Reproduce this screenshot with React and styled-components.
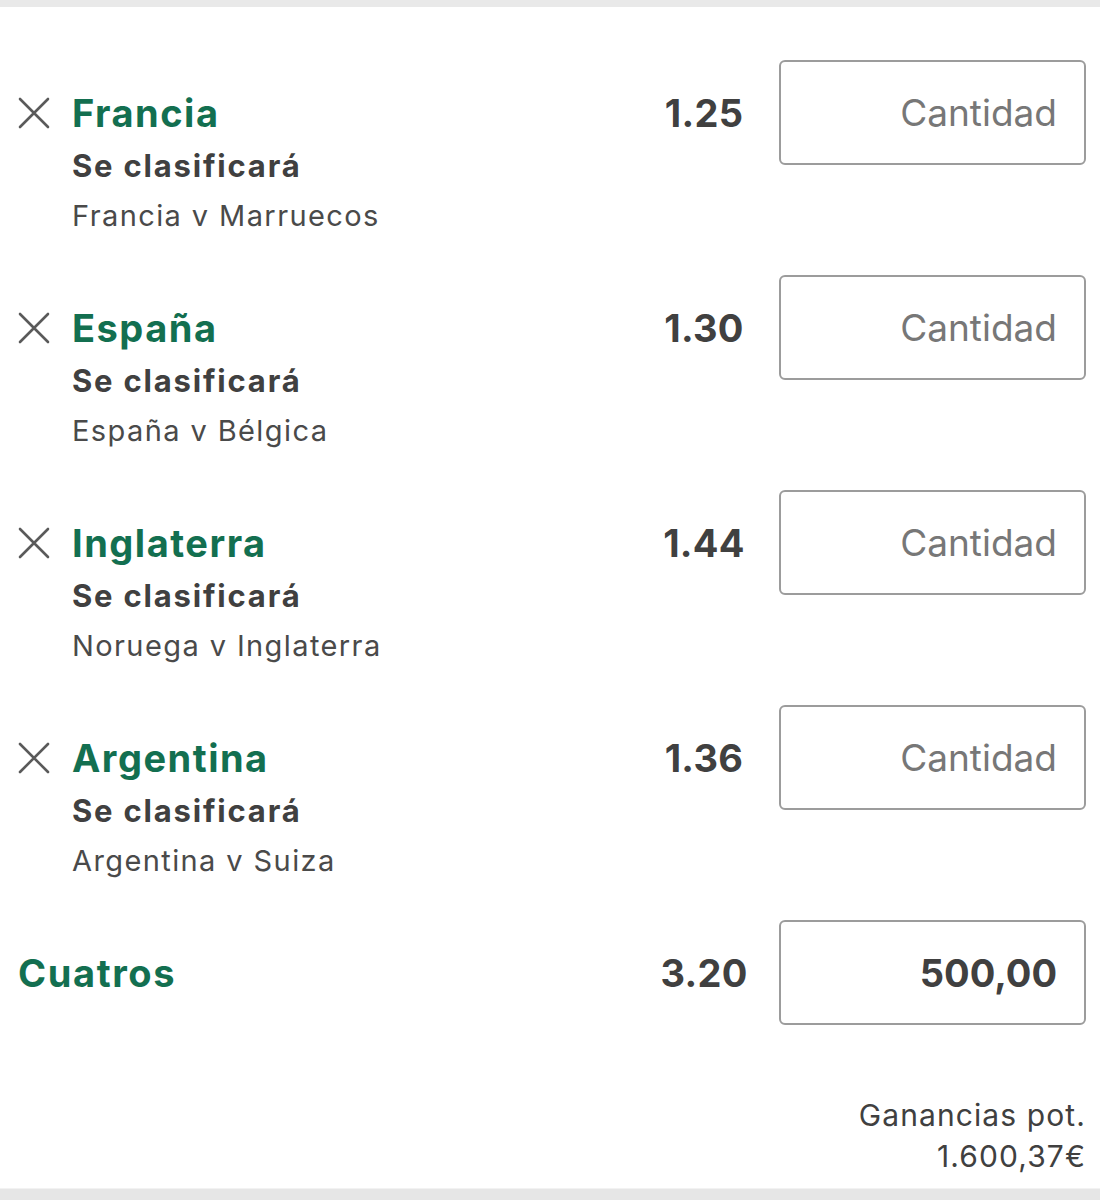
import React from "react";
import styled, { createGlobalStyle } from "styled-components";

const Global = createGlobalStyle`
  html, body { margin: 0; padding: 0; background: #fff; }
  body { font-family: Inter, "Noto Sans", "Liberation Sans", sans-serif; }
  * { box-sizing: border-box; }
`;

const GREEN = "#136f50";
const DARK = "#404040";

const Page = styled.div`
  width: 1100px;
  height: 1200px;
  display: flex;
  flex-direction: column;
  background: #fff;
`;

const TopBar = styled.div`
  height: 7px;
  background: #e9e9e9;
  flex: none;
`;

const BottomBar = styled.div`
  height: 12px;
  background: #e6e6e6;
  border-top: 1px solid #f2f2f2;
  flex: none;
`;

const Slip = styled.div`
  flex: 1;
  padding: 53px 14px 0 18px;
  display: flex;
  flex-direction: column;
`;

const Row = styled.div`
  display: flex;
  align-items: flex-start;
  height: 215px;
`;

const Info = styled.div`
  flex: 1;
  padding-top: 30px;
  display: flex;
  flex-direction: column;
`;

const Header = styled.div`
  display: flex;
  align-items: center;
  height: 46px;
`;

const Remove = styled.button`
  width: 54px;
  padding: 0;
  border: 0;
  background: none;
  display: flex;
  align-items: center;
  justify-content: flex-start;
  cursor: pointer;
`;

const Name = styled.div`
  font-size: 38px;
  font-weight: 700;
  color: ${GREEN};
  line-height: 46px;
  letter-spacing: 1.5px;
`;

const Market = styled.div`
  margin-top: 11px;
  padding-left: 54px;
  font-size: 31px;
  font-weight: 700;
  color: ${DARK};
  line-height: 38px;
  letter-spacing: 1.8px;
`;

const Event = styled.div`
  margin-top: 12px;
  padding-left: 54px;
  font-size: 29px;
  font-weight: 400;
  color: #4a4a4a;
  line-height: 38px;
  letter-spacing: 1.4px;
`;

const Stake = styled.div`
  display: flex;
  align-items: center;
  height: 105px;
`;

const Odds = styled.div`
  width: 100px;
  margin-right: 25px;
  text-align: center;
  font-size: 38px;
  font-weight: 700;
  color: ${DARK};
  letter-spacing: 0.3px;
`;

const Amount = styled.input`
  width: 307px;
  height: 105px;
  border: 2px solid #9c9c9c;
  border-radius: 6px;
  padding: 0 27px 0 0;
  text-align: right;
  font-family: inherit;
  font-size: ${(p) => (p.$filled ? "38px" : "37px")};
  font-weight: ${(p) => (p.$filled ? 700 : 400)};
  color: ${DARK};
  letter-spacing: 0;
  background: #fff;
  outline: none;
  &::placeholder { color: #777; opacity: 1; }
`;

const TotalRow = styled.div`
  display: flex;
  align-items: center;
  height: 105px;
`;

const TotalName = styled.div`
  flex: 1;
  font-size: 38px;
  font-weight: 700;
  color: ${GREEN};
  letter-spacing: 1.6px;
`;

const Returns = styled.div`
  margin-top: 70px;
  text-align: right;
  font-size: 30px;
  line-height: 41px;
  color: ${DARK};
  letter-spacing: 1.1px;
`;

const CloseIcon = () => (
  <svg width="32" height="32" viewBox="0 0 32 32" fill="none">
    <path d="M2 2 L30 30 M30 2 L2 30" stroke="#5a5a5a" strokeWidth="2.6" strokeLinecap="round" />
  </svg>
);

const selections = [
  { team: "Francia", odds: "1.25", event: "Francia v Marruecos" },
  { team: "España", odds: "1.30", event: "España v Bélgica" },
  { team: "Inglaterra", odds: "1.44", event: "Noruega v Inglaterra" },
  { team: "Argentina", odds: "1.36", event: "Argentina v Suiza" },
];

export default function App() {
  return (
    <Page>
      <Global />
      <TopBar />
      <Slip>
        {selections.map((s) => (
          <Row key={s.team}>
            <Info>
              <Header>
                <Remove aria-label="Eliminar">
                  <CloseIcon />
                </Remove>
                <Name>{s.team}</Name>
              </Header>
              <Market>Se clasificará</Market>
              <Event>{s.event}</Event>
            </Info>
            <Stake>
              <Odds>{s.odds}</Odds>
              <Amount placeholder="Cantidad" readOnly />
            </Stake>
          </Row>
        ))}
        <TotalRow>
          <TotalName>Cuatros</TotalName>
          <Odds>3.20</Odds>
          <Amount $filled value="500,00" readOnly />
        </TotalRow>
        <Returns>
          Ganancias pot.
          <br />
          1.600,37€
        </Returns>
      </Slip>
      <BottomBar />
    </Page>
  );
}
